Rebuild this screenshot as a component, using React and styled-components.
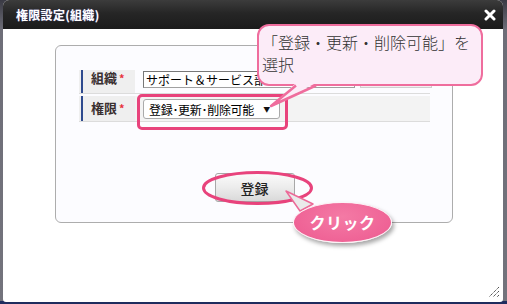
import React from "react";
import styled, { createGlobalStyle } from "styled-components";

const Global = createGlobalStyle`
  html, body { margin: 0; padding: 0; }
  body { font-family: "Noto Sans CJK JP", "Noto Sans", sans-serif; }
`;

const FONT = `"Noto Sans CJK JP", "Noto Sans", sans-serif`;

const Page = styled.div`
  position: relative;
  width: 507px;
  height: 304px;
  overflow: hidden;
  box-sizing: border-box;
  padding-left: 3px;
  background: linear-gradient(to bottom, #3a3a44 0, #6e6e78 30px, #73737c 301px, #1f2c5e 301px);
  font-family: ${FONT};
`;

const Dialog = styled.div`
  position: relative;
  width: 500px;
  height: 302px;
  background: #fff;
  border-radius: 6px 6px 3px 3px;
  display: flex;
  flex-direction: column;
  overflow: hidden;
`;

const TitleBar = styled.div`
  height: 29px;
  flex: none;
  display: flex;
  align-items: center;
  justify-content: space-between;
  padding: 0 7px 0 13px;
  background: linear-gradient(to bottom, #3c3c3c 0%, #262626 45%, #1b1b1b 100%);
`;

const Title = styled.span`
  color: #fff;
  font-size: 12px;
  font-weight: 700;
  letter-spacing: 0.3px;
  text-shadow: 0 0 1px rgba(120, 120, 255, 0.6);
`;

const Body = styled.div`
  flex: 1;
  padding: 16px 0 0 52px;
`;

const Panel = styled.div`
  box-sizing: border-box;
  width: 398px;
  height: 178px;
  border: 1px solid #adadad;
  border-radius: 6px;
  background: #fcfcff;
  padding: 24px 22px 0 23px;
  display: flex;
  flex-direction: column;
`;

const Form = styled.div`
  display: flex;
  flex-direction: column;
  gap: 2px;
`;

const Row = styled.div`
  display: flex;
  height: ${(p) => p.$h}px;
  border-bottom: 1px solid #dcdcdc;
`;

const LabelCell = styled.div`
  width: 56px;
  flex: none;
  background: #efefef;
  padding-left: 2px;
  box-sizing: border-box;
  display: flex;
`;

const LabelBar = styled.div`
  flex: 1;
  border-left: 2px solid #2e4a8e;
  padding: ${(p) => p.$pt}px 0 0 8px;
  font-size: 13px;
  font-weight: 700;
  line-height: 14px;
  color: #3a3030;
`;

const Req = styled.span`
  color: #e8323c;
  font-size: 11px;
  margin-left: 2px;
  vertical-align: top;
`;

const ValueCell = styled.div`
  flex: 1;
  display: flex;
  align-items: flex-start;
  gap: 5px;
  padding: ${(p) => p.$pt}px 0 0 8px;
  background: ${(p) => p.$bg || "transparent"};
`;

const TextInput = styled.div`
  box-sizing: border-box;
  width: 212px;
  height: 17px;
  border: 1px solid #a0a0a0;
  border-top-color: #777;
  border-left-color: #777;
  background: #fff;
  font-size: 12px;
  line-height: 15px;
  padding-left: 2px;
  color: #000;
  white-space: nowrap;
  overflow: hidden;
`;

const SideBox = styled.div`
  box-sizing: border-box;
  width: 72px;
  height: 17px;
  border: 1px solid #cfcfcf;
  background: #f1f1f1;
  color: #e00;
  font-size: 11px;
  line-height: 15px;
  padding-left: 30px;
`;

const Select = styled.div`
  box-sizing: border-box;
  width: 137px;
  height: 20px;
  border: 1px solid #aaa;
  border-radius: 3px;
  background: #fff;
  display: flex;
  align-items: center;
  justify-content: space-between;
  padding: 0 9px 0 5px;
  font-size: 12px;
  letter-spacing: -0.3px;
  color: #000;
`;

const Arrow = styled.span`
  font-size: 7px;
  color: #111;
`;

const ButtonRow = styled.div`
  display: flex;
  justify-content: center;
  margin-top: 51px;
`;

const Button = styled.div`
  box-sizing: border-box;
  width: 80px;
  height: 29px;
  border: 1px solid #a8a8a8;
  border-radius: 3px;
  background: linear-gradient(to bottom, #fafafa 0%, #ececec 50%, #d9d9d9 100%);
  display: flex;
  align-items: center;
  justify-content: center;
  font-size: 14px;
  font-weight: 500;
  color: #222;
`;

const Overlay = styled.svg`
  position: absolute;
  left: 0;
  top: 0;
  width: 507px;
  height: 304px;
  pointer-events: none;
`;

const Highlight = styled.div`
  position: absolute;
  left: 137px;
  top: 94px;
  width: 151px;
  height: 36px;
  box-sizing: border-box;
  border: 3px solid #e8437c;
  border-radius: 5px;
`;

const Callout = styled.div`
  position: absolute;
  left: 257px;
  top: 24px;
  width: 226px;
  height: 62px;
  box-sizing: border-box;
  border: 2.5px solid #ef6d9d;
  border-radius: 12px;
  background: #fcecf8;
  padding: 5px 0 0 3px;
  font-size: 16px;
  font-weight: 300;
  line-height: 22px;
  color: #333;
  white-space: nowrap;
`;

const ClickBubble = styled.div`
  position: absolute;
  left: 293px;
  top: 202px;
  width: 99px;
  height: 41px;
  box-sizing: border-box;
  border-radius: 50%;
  border: 1.5px solid #fdf2f6;
  background: radial-gradient(ellipse at 50% 35%, #f47aa5 0%, #ef6396 70%, #e65389 100%);
  box-shadow: 2px 3px 4px rgba(0, 0, 0, 0.35);
  display: flex;
  align-items: center;
  justify-content: center;
  color: #fff;
  font-size: 16px;
  font-weight: 700;
  letter-spacing: 0.5px;
  padding-bottom: 2px;
`;

const Grip = styled.svg`
  position: absolute;
  right: 3px;
  bottom: 4px;
  width: 12px;
  height: 12px;
`;

export default function App() {
  return (
    <>
      <Global />
      <Page>
        <Dialog>
          <TitleBar>
            <Title>権限設定(組織)</Title>
            <svg width="12" height="12" viewBox="0 0 12 12">
              <path d="M2 2 L10 10 M10 2 L2 10" stroke="#fff" strokeWidth="3" strokeLinecap="round" />
            </svg>
          </TitleBar>
          <Body>
            <Panel>
              <Form>
                <Row $h={23}>
                  <LabelCell>
                    <LabelBar $pt={1}>
                      組織<Req>*</Req>
                    </LabelBar>
                  </LabelCell>
                  <ValueCell $pt={1}>
                    <TextInput>サポート＆サービス部</TextInput>
                    <SideBox>!!</SideBox>
                  </ValueCell>
                </Row>
                <Row $h={25}>
                  <LabelCell>
                    <LabelBar $pt={5}>
                      権限<Req>*</Req>
                    </LabelBar>
                  </LabelCell>
                  <ValueCell $pt={3} $bg="#f3f3f3">
                    <Select>
                      <span>登録･更新･削除可能</span>
                      <Arrow>▼</Arrow>
                    </Select>
                  </ValueCell>
                </Row>
              </Form>
              <ButtonRow>
                <Button>登録</Button>
              </ButtonRow>
            </Panel>
          </Body>
          <Grip viewBox="0 0 12 12">
            <path d="M11 1 L1 11 M11 5 L5 11 M11 9 L9 11" stroke="#333" strokeWidth="1" strokeDasharray="1.2 0.8" />
          </Grip>
        </Dialog>

        <Highlight />
        <Callout>
          「登録・更新・削除可能」を
          <br />
          選択
        </Callout>
        <Overlay viewBox="0 0 507 304">
          <polygon points="296,83 316,83 271,106" fill="#fcecf8" />
          <polyline points="296,85.5 271,106 316,85.5" fill="none" stroke="#ef6d9d" strokeWidth="2.5" strokeLinejoin="round" />
          <ellipse cx="257.5" cy="188" rx="54" ry="15.5" fill="none" stroke="#e8437c" strokeWidth="3" />
          <polygon points="286,191 313,204 300,211" fill="#eaeaea" stroke="#ec6a98" strokeWidth="1.5" strokeLinejoin="round" />
        </Overlay>
        <ClickBubble>クリック</ClickBubble>
      </Page>
    </>
  );
}
